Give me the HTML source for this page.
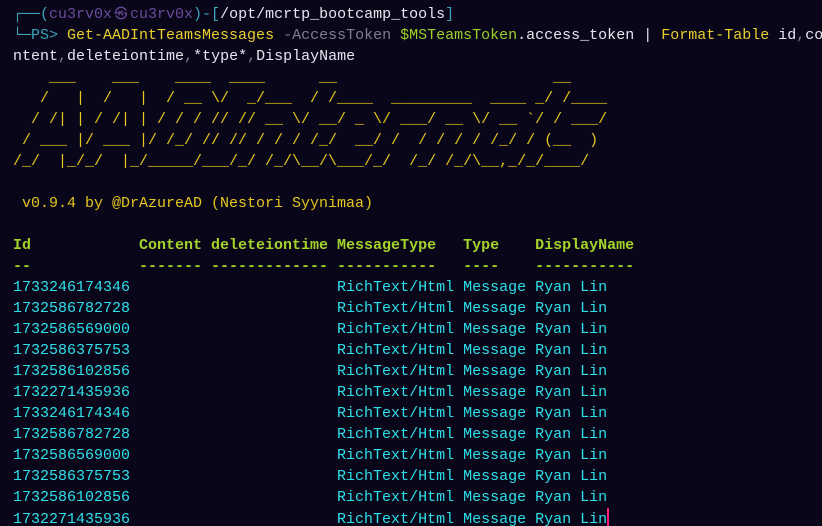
<!DOCTYPE html>
<html><head><meta charset="utf-8"><style>
html,body{margin:0;padding:0;background:#0a0619;width:822px;height:526px;overflow:hidden}
pre{margin:0;padding:4px 0 0 13px;font-family:"Liberation Mono","DejaVu Sans Mono",monospace;font-size:15px;line-height:21px;color:#d8d8e0;white-space:pre}
.b{color:#3aa3b8}.p{color:#6a4a9c}.w{color:#e6e6ee}.y{color:#e8cf2c}.g{color:#7d7d90}.gr{color:#9ad125}
.c{color:#2de0ea}.h{color:#a3d42a;font-weight:bold}.ya{color:#e4c71c}.cur{display:inline-block;width:2px;height:19px;background:#ff1f7a;vertical-align:-4px}
.s{display:inline-block;width:18px;text-align:center;font-size:13px}
</style></head><body><pre><span class="b">┌──(</span><span class="p">cu3rv0x<span class="s">㉿</span>cu3rv0x</span><span class="b">)-[</span><span class="w">/opt/mcrtp_bootcamp_tools</span><span class="b">]</span>
<span class="b">└─PS&gt;</span> <span class="y">Get-AADIntTeamsMessages</span> <span class="g">-AccessToken</span> <span class="gr">$MSTeamsToken</span><span class="w">.access_token | </span><span class="y">Format-Table</span><span class="w"> id</span><span class="g">,</span><span class="w">co</span>
<span class="w">ntent</span><span class="g">,</span><span class="w">deleteiontime</span><span class="g">,</span><span class="w">*type*</span><span class="g">,</span><span class="w">DisplayName</span>
<span class="ya">    ___    ___    ____  ____      __                        __
   /   |  /   |  / __ \/  _/___  / /____  _________  ____ _/ /____
  / /| | / /| | / / / // // __ \/ __/ _ \/ ___/ __ \/ __ `/ / ___/
 / ___ |/ ___ |/ /_/ // // / / / /_/  __/ /  / / / / /_/ / (__  )
/_/  |_/_/  |_/_____/___/_/ /_/\__/\___/_/  /_/ /_/\__,_/_/____/

 v0.9.4 by @DrAzureAD (Nestori Syynimaa)</span>

<span class="h">Id            Content deleteiontime MessageType   Type    DisplayName
--            ------- ------------- -----------   ----    -----------</span>
<span class="c">1733246174346                       RichText/Html Message Ryan Lin
1732586782728                       RichText/Html Message Ryan Lin
1732586569000                       RichText/Html Message Ryan Lin
1732586375753                       RichText/Html Message Ryan Lin
1732586102856                       RichText/Html Message Ryan Lin
1732271435936                       RichText/Html Message Ryan Lin
1733246174346                       RichText/Html Message Ryan Lin
1732586782728                       RichText/Html Message Ryan Lin
1732586569000                       RichText/Html Message Ryan Lin
1732586375753                       RichText/Html Message Ryan Lin
1732586102856                       RichText/Html Message Ryan Lin
1732271435936                       RichText/Html Message Ryan Lin</span><span class="cur"></span></pre></body></html>
